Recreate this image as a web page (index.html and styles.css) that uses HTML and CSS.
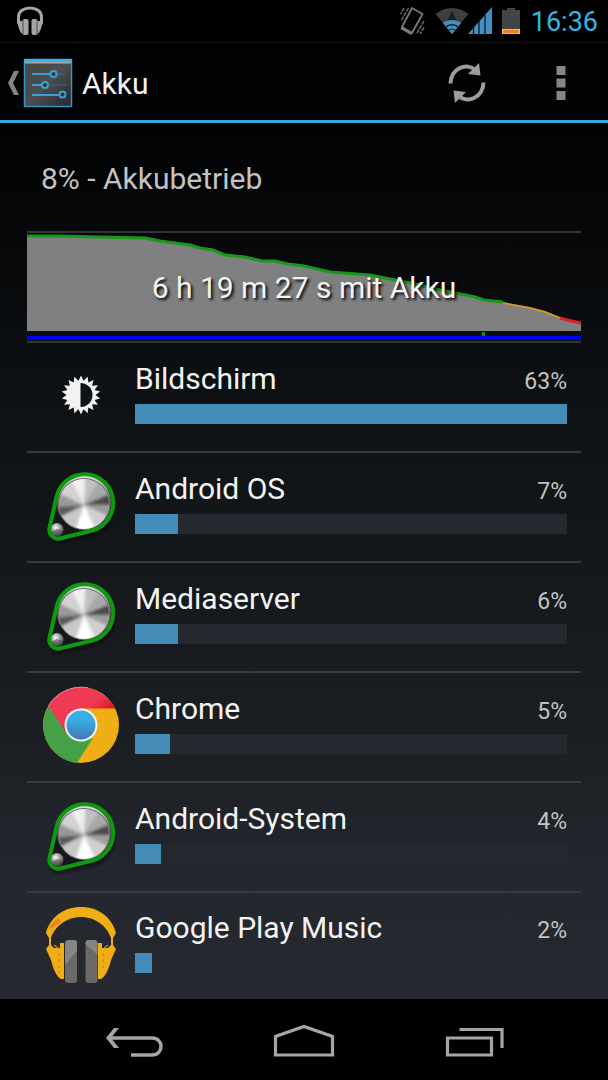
FILE: index.html
```html
<!DOCTYPE html>
<html lang="de">
<head>
    <meta charset="UTF-8">
    <meta name="viewport" content="width=device-width, initial-scale=1.0">
    <title>Akku</title>
    <link rel="stylesheet" href="styles.css">
</head>
<body>

<!-- shared icon for system processes -->
<svg class="defs" width="0" height="0" aria-hidden="true">
    <defs>
        <linearGradient id="rim" x1="0" y1="0" x2="0" y2="1">
            <stop offset="0" stop-color="#e4e4e4"/>
            <stop offset="0.5" stop-color="#5c5c5c"/>
            <stop offset="1" stop-color="#d8d8d8"/>
        </linearGradient>
        <radialGradient id="bolt" cx="0.4" cy="0.35" r="0.7">
            <stop offset="0" stop-color="#ffffff"/>
            <stop offset="0.5" stop-color="#9a9a9a"/>
            <stop offset="1" stop-color="#444444"/>
        </radialGradient>
        <filter id="soft" x="-20%" y="-20%" width="140%" height="140%">
            <feGaussianBlur stdDeviation="1.6"/>
        </filter>
        <clipPath id="face"><circle cx="44" cy="35" r="25"/></clipPath>
        <symbol id="system" viewBox="1 -4 80 80">
            <path d="M18.500 29 A28.700 28.700 0 1 1 53 65 L20 71.500 A9 9 0 0 1 9.500 61 Z" fill="#000" opacity="0.4" transform="translate(0 3)" filter="url(#soft)"/>
            <path d="M16.500 28 A28.700 28.700 0 1 1 52.500 61 L20 69 A8.500 8.500 0 0 1 9.500 59 Z" fill="#15181b"/>
            <circle cx="44" cy="33.500" r="27" fill="url(#rim)"/>
            <circle cx="44" cy="35" r="26" fill="#6d6d6d"/>
            <g clip-path="url(#face)">
                <rect x="16" y="8" width="56" height="56" fill="#b4b4b4"/>
                <g filter="url(#soft)">
                    <path d="M44 36 L27 4 L46 4 Z" fill="#f0f0f0"/>
                    <path d="M44 36 L46 4 L62 8 Z" fill="#c0c0c0"/>
                    <path d="M44 36 L62 8 L76 22 Z" fill="#a8a8a8"/>
                    <path d="M44 36 L76 22 L76 36 Z" fill="#4c4c4c"/>
                    <path d="M44 36 L76 36 L74 50 Z" fill="#9c9c9c"/>
                    <path d="M44 36 L74 50 L60 70 Z" fill="#d0d0d0"/>
                    <path d="M44 36 L60 70 L32 70 Z" fill="#ffffff"/>
                    <path d="M44 36 L32 70 L12 52 Z" fill="#c8c8c8"/>
                    <path d="M44 36 L12 52 L12 38 Z" fill="#5a5a5a"/>
                    <path d="M44 36 L12 38 L14 22 Z" fill="#9a9a9a"/>
                    <path d="M44 36 L14 22 L27 4 Z" fill="#d2d2d2"/>
                </g>
            </g>
            <circle cx="17" cy="60.500" r="6.500" fill="url(#bolt)"/>
            <path d="M11 63 A6 6 0 0 0 23 62 L17 60 Z" fill="#4a4a4a" opacity="0.5"/>
            <path d="M16.500 28 A28.700 28.700 0 1 1 52.500 61.500 L20 69.500 A8.800 8.800 0 0 1 9.500 59 Z" fill="none" stroke="#0f990f" stroke-width="4" stroke-linejoin="round"/>
        </symbol>
    </defs>
</svg>

<div class="screen">
    <header class="status-bar">
        <svg width="28" height="30" viewBox="0 0 28 30" aria-hidden="true">
            <path d="M2.500 15 V11 C2.500 5 8 2 14 2 C20 2 25.500 5 25.500 11 V15" fill="none" stroke="#a3a6a6" stroke-width="3"/>
            <path d="M1 15 H7 V28 C3 27 3 20 1 17 Z M27 15 H21 V28 C25 27 25 20 27 17 Z" fill="#a3a6a6"/>
            <rect x="6.500" y="13" width="6" height="16" rx="2" fill="#a3a6a6"/>
            <rect x="15.500" y="13" width="6" height="16" rx="2" fill="#a3a6a6"/>
            <path d="M7 14 V28 M21 14 V28" stroke="#4d4f4f" stroke-width="1"/>
        </svg>
        <div class="status-icons">
            <svg width="26" height="30" viewBox="0 0 26 30" aria-hidden="true">
                <path d="M13 2 L23.500 8 L13 27 L3 21 Z" fill="none" stroke="#77797a" stroke-width="1.800" stroke-linejoin="round"/>
                <path d="M3 20.500 L14 26.500 L12 29 L1.500 23 Z" fill="#7a7c7c"/>
                <path d="M9.500 2 L2 15 M5 2 L1.500 8 M25 15 L17.500 28 M25 21.500 L21 28" stroke="#6a6c6c" stroke-width="1.500" stroke-dasharray="4 1"/>
            </svg>
            <svg width="34" height="28" viewBox="0 0 34 28" aria-hidden="true">
                <defs>
                    <clipPath id="cone"><path d="M17 27 L0.500 7 C10 -1 24 -1 33.500 7 Z"/></clipPath>
                </defs>
                <g clip-path="url(#cone)">
                    <rect width="34" height="28" fill="#3d3f40"/>
                    <path d="M17 4 L12 14 H22 Z" fill="#1c1e1f"/>
                    <circle cx="17" cy="27" r="14" fill="#4590c0"/>
                    <circle cx="17" cy="27" r="10" fill="#0c1a24"/>
                    <circle cx="17" cy="27" r="8.500" fill="#4590c0"/>
                    <circle cx="17" cy="27" r="5.500" fill="#0c1a24"/>
                    <circle cx="17" cy="27" r="4.500" fill="#4590c0"/>
                </g>
            </svg>
            <svg width="24" height="28" viewBox="0 0 24 28" aria-hidden="true">
                <path d="M0 27 L24 0 V27 Z" fill="#4590c0"/>
                <path d="M5.500 18 V27 M11 12 V27 M17 6 V27" stroke="#0c1a24" stroke-width="1.300"/>
            </svg>
            <svg width="18" height="28" viewBox="0 0 18 28" aria-hidden="true">
                <path d="M0 3 H5 V1 H13 V3 H18 V27 H0 Z" fill="#424445"/>
                <rect y="22" width="18" height="5" fill="#f5c518"/>
                <rect x="1.500" y="23" width="15" height="3" fill="#f4801c"/>
            </svg>
            <time class="clock">16:36</time>
        </div>
    </header>

    <div class="action-bar">
        <button class="up-button" aria-label="Nach oben">
            <svg width="12" height="26" viewBox="0 0 12 26" aria-hidden="true">
                <path d="M7 1 H12 L6 13 L12 25 H7 L1 13 Z" fill="#858585"/>
            </svg>
            <svg width="50" height="50" viewBox="0 0 50 50" aria-hidden="true">
                <defs>
                    <linearGradient id="tile" x1="0" y1="0" x2="1" y2="1">
                        <stop offset="0" stop-color="#454545"/>
                        <stop offset="0.500" stop-color="#4c4e4f"/>
                        <stop offset="1" stop-color="#20272f"/>
                    </linearGradient>
                </defs>
                <rect x="1" y="1" width="48" height="48" rx="1" fill="url(#tile)"/>
                <rect x="1.500" y="1.500" width="47" height="47" fill="none" stroke="#3a92c2" stroke-width="1.500"/>
                <rect x="1" y="1" width="48" height="3" fill="#33b5e5"/>
                <rect x="2" y="4" width="46" height="1.500" fill="#a8a8a8"/>
                <path d="M9 16 H43 M9 27 H43" stroke="#356f92" stroke-width="1"/>
                <path d="M9 16 H28 M9 27 H19 M9 37 H38" stroke="#3b9fd4" stroke-width="2"/>
                <circle cx="30.500" cy="16" r="3" fill="#333" stroke="#3b9fd4" stroke-width="2"/>
                <circle cx="22" cy="27" r="3" fill="#333" stroke="#3b9fd4" stroke-width="2"/>
                <circle cx="39.500" cy="36.500" r="3" fill="#333" stroke="#3b9fd4" stroke-width="2"/>
            </svg>
        </button>
        <h1 class="title">Akku</h1>
        <button class="action" aria-label="Aktualisieren">
            <svg width="38" height="40" viewBox="0 0 38 40" aria-hidden="true">
                <path d="M2.500 20.500 C3 5 19 -1 28 7.500" fill="none" stroke="#9c9e9e" stroke-width="4"/>
                <path d="M31 0 L32.500 12.500 L20 11 Z" fill="#9c9e9e"/>
                <path d="M35.500 19.500 C35 35 19 41 10 32.500" fill="none" stroke="#9c9e9e" stroke-width="4"/>
                <path d="M7 40 L5.500 27.500 L18 29 Z" fill="#9c9e9e"/>
            </svg>
        </button>
        <button class="action" aria-label="Weitere Optionen">
            <svg width="10" height="36" viewBox="0 0 10 36" aria-hidden="true">
                <path d="M0.500 1 H9.500 V10 H0.500 Z M0.500 13.500 H9.500 V22.500 H0.500 Z M0.500 26 H9.500 V35 H0.500 Z" fill="#868686"/>
            </svg>
        </button>
    </div>

    <main class="content">
        <p class="battery-status">8% - Akkubetrieb</p>

        <div class="history">
            <svg class="history-chart" viewBox="0 0 554 108" preserveAspectRatio="none" aria-hidden="true">
                <path d="M0 2 L33 3 L73 4 L118 5 L133 8 L163 12 L173 15 L186 17 L198 22 L218 24 L235 28 L248 28 L261 31 L277 33 L303 39 L343 42 L363 46 L373 48 L393 52 L413 57 L428 60 L448 64 L457 67 L476 69 L503 74 L518 78 L533 84 L554 90 V98 H0 Z" fill="#808080"/>
                <path d="M0 3 L33 3 L73 4 L118 5 L133 8 L163 12 L173 15 L186 17 L198 22 L218 24 L235 28 L248 28 L261 31 L277 33 L303 39 L343 42 L363 46 L373 48 L393 52 L413 57 L428 60 L448 64 L457 67 L476 69" fill="none" stroke="#17981a" stroke-width="3"/>
                <path d="M476 70 L503 75 L518 79 L533 85" fill="none" stroke="#d99c1a" stroke-width="1.500"/>
                <path d="M533 85 L540 87 L554 90" fill="none" stroke="#e81c24" stroke-width="3"/>
                <rect x="455" y="99" width="3" height="4" fill="#0f8f1c"/>
                <rect x="0" y="103" width="554" height="4" fill="#0000ff"/>
            </svg>
            <span class="history-label">6 h 19 m 27 s mit Akku</span>
        </div>

        <ul class="usage-list">
            <li class="usage">
                <svg class="icon" viewBox="0 0 80 80" aria-hidden="true">
                    <path d="M40 20.500 L42.500 25.700 L46.700 21.700 L47.300 27.400 L52.500 25.100 L51.100 30.700 L56.900 30.300 L53.600 35 L59.200 36.600 L54.500 40 L59.200 43.400 L53.600 45 L56.900 49.700 L51.100 49.300 L52.500 54.900 L47.300 52.600 L46.700 58.300 L42.500 54.300 L40 59.500 L37.500 54.300 L33.300 58.300 L32.700 52.600 L27.500 54.900 L28.900 49.300 L23.100 49.700 L26.400 45 L20.800 43.400 L25.500 40 L20.800 36.600 L26.400 35 L23.100 30.300 L28.900 30.700 L27.500 25.100 L32.700 27.400 L33.300 21.700 L37.500 25.700 Z" fill="#f2f2f2"/>
                    <path d="M39.500 28 A12 12 0 0 1 39.500 52 Z" fill="#101316"/>
                </svg>
                <div class="usage-info">
                    <div class="usage-text"><span class="name">Bildschirm</span><span class="percent">63%</span></div>
                    <div class="bar"><div class="bar-fill" style="width: 100%"></div></div>
                </div>
            </li>
            <li class="usage">
                <svg class="icon" aria-hidden="true"><use href="#system"/></svg>
                <div class="usage-info">
                    <div class="usage-text"><span class="name">Android OS</span><span class="percent">7%</span></div>
                    <div class="bar"><div class="bar-fill" style="width: 10%"></div></div>
                </div>
            </li>
            <li class="usage">
                <svg class="icon" aria-hidden="true"><use href="#system"/></svg>
                <div class="usage-info">
                    <div class="usage-text"><span class="name">Mediaserver</span><span class="percent">6%</span></div>
                    <div class="bar"><div class="bar-fill" style="width: 10%"></div></div>
                </div>
            </li>
            <li class="usage">
                <svg class="icon" viewBox="0 0 80 80" aria-hidden="true">
                    <defs>
                        <linearGradient id="red" x1="0" y1="0" x2="1" y2="1">
                            <stop offset="0.500" stop-color="#f03a55"/>
                            <stop offset="0.700" stop-color="#e01822"/>
                        </linearGradient>
                        <linearGradient id="blue" x1="0" y1="0" x2="0" y2="1">
                            <stop offset="0.300" stop-color="#3aaee6"/>
                            <stop offset="1" stop-color="#3f78ac"/>
                        </linearGradient>
                    </defs>
                    <circle cx="40" cy="40" r="38" fill="#efae14"/>
                    <path d="M7 21 A38 38 0 0 1 74 23.500 H40 L24 48 Z" fill="url(#red)"/>
                    <path d="M7.500 21 A38 38 0 0 0 36 78 L52 53 L40 56 L24.500 47 Z" fill="#46a046"/>
                    <path d="M7.500 21 A38 38 0 0 1 47 2.800" fill="none" stroke="#c89098" stroke-width="1"/>
                    <circle cx="40" cy="40" r="16.500" fill="#f4f4f4"/>
                    <circle cx="40" cy="40" r="14.500" fill="url(#blue)"/>
                </svg>
                <div class="usage-info">
                    <div class="usage-text"><span class="name">Chrome</span><span class="percent">5%</span></div>
                    <div class="bar"><div class="bar-fill" style="width: 8%"></div></div>
                </div>
            </li>
            <li class="usage">
                <svg class="icon" aria-hidden="true"><use href="#system"/></svg>
                <div class="usage-info">
                    <div class="usage-text"><span class="name">Android-System</span><span class="percent">4%</span></div>
                    <div class="bar"><div class="bar-fill" style="width: 6%"></div></div>
                </div>
            </li>
            <li class="usage">
                <svg class="icon" viewBox="0 -3 80 80" aria-hidden="true">
                    <path d="M5 26 C9 10 23 0 40 0 C57 0 71 10 75 26 L72 31 V38 L75 42 L70 53 C68 62 64 70 60 72 H57 V36 H61 V41 H67 L70 38 V31 C66 19 54 10 40 10 C26 10 14 19 10 31 V38 L13 41 H19 V36 H23 V72 H20 C16 70 12 62 10 53 L5 42 L8 38 V31 Z" fill="#efae14"/>
                    <path d="M8 19 L17 11 L20 15 L10 22 Z" fill="#e8861c"/>
                    <path d="M18 46 V66 M62 46 V62" stroke="#e8861c" stroke-width="1.500" stroke-dasharray="3 3"/>
                    <path d="M13 38 L17 41 M67 38 L63 41" stroke="#8a8c8e" stroke-width="1.500"/>
                    <rect x="24" y="33" width="12" height="43" rx="3" fill="#6c6a68"/>
                    <path d="M24 40 Q24 33 28 33 H33 Q36 33 36 37 V44 L24 58 Z" fill="#858583"/>
                    <rect x="44.500" y="33" width="12" height="43" rx="3" fill="#6c6a68"/>
                    <path d="M44.500 37 Q44.500 33 48 33 H53 Q56.500 33 56.500 37 V48 Z" fill="#858583"/>
                </svg>
                <div class="usage-info">
                    <div class="usage-text"><span class="name">Google Play Music</span><span class="percent">2%</span></div>
                    <div class="bar"><div class="bar-fill" style="width: 4%"></div></div>
                </div>
            </li>
        </ul>
    </main>

    <nav class="nav-bar">
        <button class="nav-button" aria-label="Zurück">
            <svg width="60" height="36" viewBox="0 0 60 36" aria-hidden="true">
                <path d="M6 14 H48 C60 14 60 31 48 31 H27" fill="none" stroke="#a3a6a4" stroke-width="3.500"/>
                <path d="M2 14 L10 4 H15 L7 14 L15 24 H10 Z" fill="#a3a6a4"/>
            </svg>
        </button>
        <button class="nav-button" aria-label="Startseite">
            <svg width="62" height="36" viewBox="0 0 62 36" aria-hidden="true">
                <path d="M2.500 31 V12.500 L31 2.500 L59.500 12.500 V31 Z" fill="none" stroke="#a3a6a4" stroke-width="3.200"/>
            </svg>
        </button>
        <button class="nav-button" aria-label="Letzte Apps">
            <svg width="60" height="36" viewBox="0 0 60 36" aria-hidden="true">
                <path d="M3.500 14 H47.500 V31 H3.500 Z M15.500 5.500 H58 V24" fill="none" stroke="#a3a6a4" stroke-width="3.200"/>
            </svg>
        </button>
    </nav>
</div>

</body>
</html>
```
FILE: styles.css
```css
* {
    box-sizing: border-box;
}
body {
    margin: 0;
    background: #000;
    color: #f3f3f3;
    font-family: Roboto, "Noto Sans", sans-serif;
    font-size: 30px;
    line-height: 36px;
}
button {
    background: none;
    border: none;
    padding: 0;
    cursor: pointer;
}
svg {
    display: block;
    flex-shrink: 0;
}
.defs {
    position: absolute;
}
.screen {
    display: flex;
    flex-direction: column;
    height: 100vh;
    background: linear-gradient(#000 0%, #020304 12%, #07090b 25%, #0e1114 36%, #14181b 52%, #1b1f23 68%, #24272e 82%, #25282f 92%);
}

/* Status bar */
.status-bar {
    display: flex;
    justify-content: space-between;
    align-items: center;
    height: 43px;
    padding: 0 10px 0 16px;
    background: #000;
    border-bottom: 1px solid #141414;
}
.status-icons {
    display: flex;
    align-items: center;
    gap: 9px;
}
.status-icons svg + svg {
    margin-left: 1px;
}
.status-icons svg:nth-child(3) {
    margin-left: -10px;
}
.clock {
    color: #33b5e5;
    font-size: 27px;
    margin-left: 2px;
    padding-top: 2px;
}

/* Action bar */
.action-bar {
    display: flex;
    align-items: center;
    height: 80px;
    padding: 2px 0 0 7px;
    border-bottom: 3px solid #33a9dc;
}
.up-button {
    display: flex;
    align-items: center;
    gap: 4px;
}
.title {
    flex: 1;
    margin: 0;
    padding: 2px 0 0 9px;
    font-size: 30px;
    font-weight: 400;
}
.action {
    display: flex;
    justify-content: center;
    width: 94px;
}

/* Content */
.content {
    flex: 1;
    min-height: 0;
    padding: 0 27px;
    overflow-y: auto;
    scrollbar-width: none;
}
.battery-status {
    margin: 0;
    padding: 38px 14px 34px;
    color: #c2c2c2;
    border-bottom: 2px solid #323435;
}
.history {
    position: relative;
    border-bottom: 2px solid #323435;
}
.history-chart {
    width: 100%;
    height: 108px;
}
.history-label {
    position: absolute;
    top: 37px;
    left: 0;
    right: 0;
    text-align: center;
    text-shadow: 2px 2px 3px #000;
}
.usage-list {
    list-style: none;
    margin: 0;
    padding: 0;
}
.usage {
    display: flex;
    align-items: center;
    gap: 14px;
    height: 110px;
    padding: 0 14px 4px;
    border-bottom: 2px solid #383b3d;
}
.usage:last-child {
    border-bottom: none;
    height: 106px;
}
.icon {
    width: 80px;
    height: 80px;
}
.usage-info {
    flex: 1;
    padding-bottom: 5px;
}
.usage-text {
    display: flex;
    justify-content: space-between;
    align-items: baseline;
    margin-bottom: 7px;
}
.percent {
    color: #c2c2c2;
    font-size: 23px;
    line-height: 24px;
}
.bar {
    height: 20px;
    background: #25282f;
}
.bar-fill {
    height: 100%;
    background: #458bb8;
}

/* Navigation bar */
.nav-bar {
    display: grid;
    grid-template-columns: repeat(3, 1fr);
    height: 81px;
    padding: 4px 8% 0;
    background: #000;
}
.nav-button {
    display: flex;
    justify-content: center;
    align-items: center;
}
```
